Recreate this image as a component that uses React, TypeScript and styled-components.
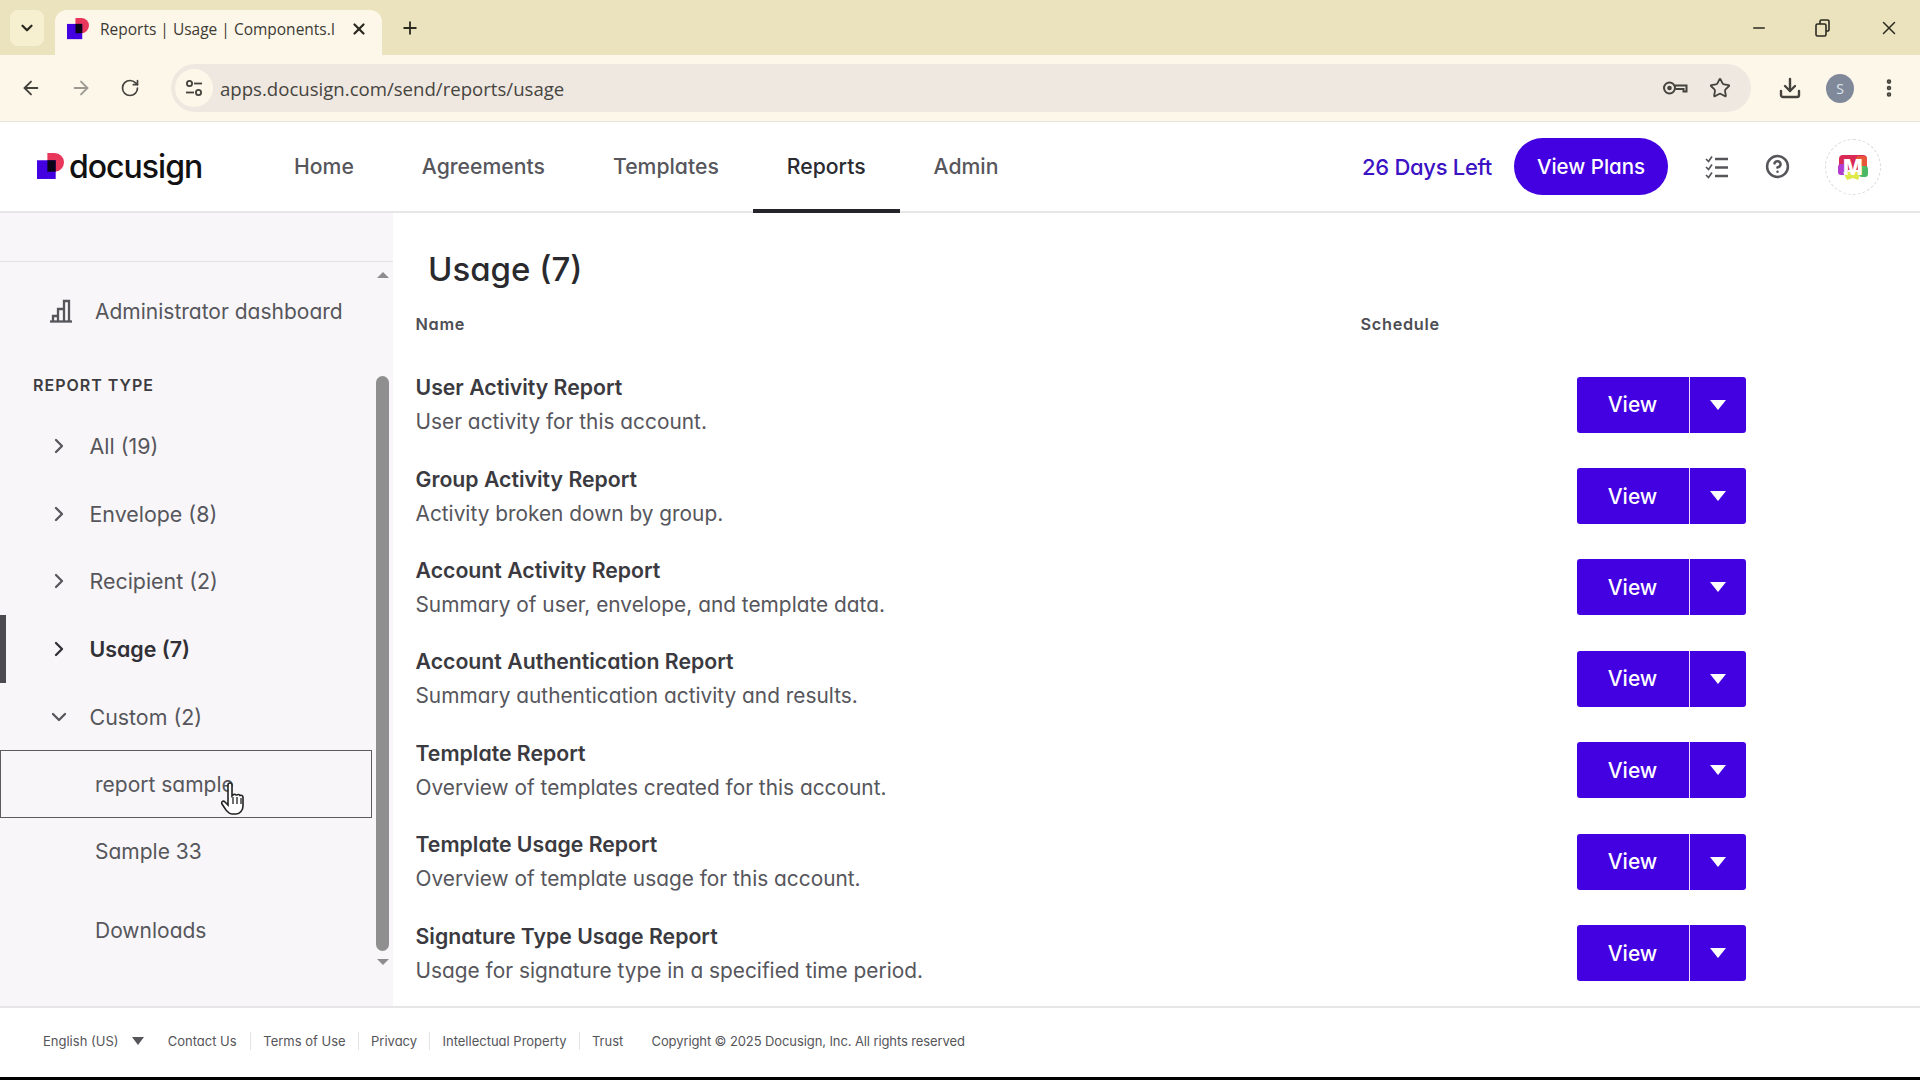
import { styled, createGlobalStyle } from "styled-components";
import {
  ArrowLeft,
  ArrowRight,
  ChevronDown,
  ChevronRight,
  CircleHelp,
  Download,
  EllipsisVertical,
  Minus,
  Plus,
  RotateCw,
  Star,
  X,
} from "lucide-react";

const BLUE = "#4300e0";
const MUTED = "#56565c";

const NAV_LINKS = ["Home", "Agreements", "Templates", "Reports", "Admin"];

const REPORT_TYPES = [
  { label: "All (19)" },
  { label: "Envelope (8)" },
  { label: "Recipient (2)" },
  { label: "Usage (7)", active: true },
  { label: "Custom (2)", open: true },
];

const REPORTS = [
  { name: "User Activity Report", text: "User activity for this account." },
  { name: "Group Activity Report", text: "Activity broken down by group." },
  { name: "Account Activity Report", text: "Summary of user, envelope, and template data." },
  { name: "Account Authentication Report", text: "Summary authentication activity and results." },
  { name: "Template Report", text: "Overview of templates created for this account." },
  { name: "Template Usage Report", text: "Overview of template usage for this account." },
  { name: "Signature Type Usage Report", text: "Usage for signature type in a specified time period." },
];

const FOOTER_LINKS = ["Contact Us", "Terms of Use", "Privacy", "Intellectual Property", "Trust"];

const GlobalStyle = createGlobalStyle`
  html, body {
    margin: 0;
    padding: 0;
    background: #000;
  }
  body {
    font-family: Inter, "Liberation Sans", sans-serif;
    font-feature-settings: "cv11";
  }
`;

const Frame = styled.div`
  width: 1920px;
  height: 1080px;
  display: flex;
  flex-direction: column;
  overflow: hidden;
  background: #fff;
`;

const TabStrip = styled.div`
  flex: 0 0 55px;
  display: flex;
  align-items: flex-end;
  background: #ebe3bd;
  color: #2b2a20;
`;

const TabMenu = styled.div`
  width: 34px;
  height: 36px;
  margin: 0 11px 9px 10px;
  display: flex;
  align-items: center;
  justify-content: center;
  border-radius: 8px;
  background: #f6efd0;
`;

const Tab = styled.div`
  width: 327px;
  height: 45px;
  box-sizing: border-box;
  padding: 0 14px 7px 12px;
  display: flex;
  align-items: center;
  gap: 11px;
  border-radius: 12px 12px 0 0;
  background: #fdf7ea;
`;

const TabTitle = styled.span`
  flex: 1;
  overflow: hidden;
  white-space: nowrap;
  font-family: "Open Sans", sans-serif;
  font-size: 15.5px;
  color: #3c3a34;
`;

const NewTab = styled.div`
  margin: 0 0 11px 18px;
  height: 32px;
  display: flex;
  align-items: center;
`;

const WindowControls = styled.div`
  margin: 0 20px 16px auto;
  display: flex;
  align-items: center;
  gap: 47px;
`;

const Toolbar = styled.div`
  flex: 0 0 66px;
  box-sizing: border-box;
  padding: 0 20px;
  display: flex;
  align-items: center;
  background: #fdf7ea;
  color: #45433d;
`;

const ToolButtons = styled.div`
  width: 151px;
  display: flex;
  align-items: center;
  gap: 28px;
`;

const UrlBar = styled.div`
  width: 1580px;
  height: 48px;
  box-sizing: border-box;
  padding: 0 20px 0 4px;
  display: flex;
  align-items: center;
  border-radius: 24px;
  background: #efe8e1;
`;

const SiteInfo = styled.div`
  width: 38px;
  height: 38px;
  margin-right: 7px;
  display: flex;
  align-items: center;
  justify-content: center;
  border-radius: 50%;
  background: #fdf7ea;
`;

const UrlText = styled.span`
  flex: 1;
  font-family: "Open Sans", sans-serif;
  font-size: 18.6px;
  color: #46443f;
`;

const UrlIcons = styled.div`
  display: flex;
  align-items: center;
  gap: 21px;
`;

const ToolRight = styled.div`
  margin-left: auto;
  display: flex;
  align-items: center;
  gap: 24px;
`;

const ProfileDot = styled.div`
  width: 28px;
  height: 29px;
  display: flex;
  align-items: center;
  justify-content: center;
  border-radius: 50%;
  background: #80899a;
  color: #dfe6ee;
  font-family: "Open Sans", sans-serif;
  font-size: 14px;
`;

const Header = styled.header`
  flex: 0 0 92px;
  box-sizing: border-box;
  padding: 0 39px 0 37px;
  display: flex;
  align-items: stretch;
  border-top: 1px solid #e7e4de;
  border-bottom: 2px solid #e6e6e6;
  background: #fff;
`;

const Logo = styled.div`
  width: 220px;
  display: flex;
  align-items: center;
  gap: 5px;
`;

const LogoText = styled.span`
  font-family: Inter, sans-serif;
  font-size: 32px;
  font-weight: 500;
  letter-spacing: -1px;
  color: #111;
`;

const Nav = styled.nav`
  display: flex;
  align-items: stretch;
  margin-left: 3px;
`;

const NavLink = styled.a<{ $active?: boolean }>`
  padding: 0 34px;
  display: flex;
  align-items: center;
  margin-bottom: -2px;
  border-bottom: 4px solid ${({ $active }) => ($active ? "#24242a" : "transparent")};
  box-sizing: border-box;
  font-size: 21.2px;
  font-weight: 500;
  color: ${({ $active }) => ($active ? "#2a2a30" : MUTED)};
`;

const HeaderRight = styled.div`
  margin-left: auto;
  display: flex;
  align-items: center;
`;

const DaysLeft = styled.span`
  font-size: 22px;
  font-weight: 500;
  color: #3b12c4;
  letter-spacing: -0.3px;
`;

const PlansButton = styled.button`
  width: 154px;
  height: 57px;
  margin: 0 36px 0 22px;
  border: none;
  border-radius: 29px;
  background: ${BLUE};
  color: #fff;
  font-family: inherit;
  font-feature-settings: inherit;
  font-size: 20.5px;
  font-weight: 500;
`;

const HeaderIcons = styled.div`
  display: flex;
  align-items: center;
  gap: 35px;
  color: #55555a;
`;

const Avatar = styled.div`
  width: 56px;
  height: 56px;
  margin-left: 35px;
  display: flex;
  align-items: center;
  justify-content: center;
  border: 1px dashed #d8d8d8;
  border-radius: 50%;
  box-sizing: border-box;
`;

const Body = styled.div`
  flex: 1;
  min-height: 0;
  display: flex;
`;

const Sidebar = styled.aside`
  flex: 0 0 393px;
  display: flex;
  flex-direction: column;
  background: #f8f6f8;
`;

const SideTop = styled.div`
  flex: 0 0 48px;
  border-bottom: 1px solid #e4e3e4;
`;

const SideScroll = styled.div`
  flex: 1;
  min-height: 0;
  display: flex;
`;

const SideNav = styled.div`
  flex: 0 0 372px;
  display: flex;
  flex-direction: column;
`;

const DashboardRow = styled.div`
  height: 98px;
  padding-left: 49px;
  display: flex;
  align-items: center;
  gap: 22px;
  font-size: 21px;
  color: ${MUTED};
`;

const SideLabel = styled.div`
  height: 54px;
  margin-top: -2px;
  padding-left: 33px;
  display: flex;
  align-items: center;
  font-size: 16px;
  font-weight: 600;
  letter-spacing: 1px;
  color: #3c3c40;
`;

const TypeRow = styled.div<{ $active?: boolean }>`
  height: 67.7px;
  box-sizing: border-box;
  padding-left: 47px;
  display: flex;
  align-items: center;
  gap: 18.5px;
  border-left: 6px solid ${({ $active }) => ($active ? "#4a4a50" : "transparent")};
  font-size: 21.4px;
  font-weight: ${({ $active }) => ($active ? 600 : 400)};
  color: ${({ $active }) => ($active ? "#303036" : MUTED)};

  & > svg {
    margin-left: -6px;
  }
`;

const SubRow = styled.div<{ $focused?: boolean; $gapTop?: number }>`
  position: relative;
  height: 67.5px;
  box-sizing: border-box;
  padding-left: 94px;
  display: flex;
  align-items: center;
  margin-top: ${({ $gapTop }) => $gapTop ?? 0}px;
  border: 1.5px solid ${({ $focused }) => ($focused ? "#5c5c5c" : "transparent")};
  font-size: 21px;
  color: ${MUTED};
`;

const HandCursor = styled.svg`
  position: absolute;
  left: 220px;
  top: 31px;
`;

const ScrollTrack = styled.div`
  flex: 0 0 13px;
  margin-left: 4px;
  display: flex;
  flex-direction: column;
  align-items: center;
  color: #8d8d8d;
`;

const ScrollArrow = styled.div<{ $down?: boolean }>`
  width: 0;
  height: 0;
  margin-top: ${({ $down }) => ($down ? 8 : 10)}px;
  border-left: 6px solid transparent;
  border-right: 6px solid transparent;
  ${({ $down }) => ($down ? "border-top: 6px solid #8d8d8d;" : "border-bottom: 6px solid #8d8d8d;")}
`;

const ScrollThumb = styled.div`
  width: 13px;
  height: 575px;
  margin-top: 98px;
  border-radius: 7px;
  background: #8f8f8f;
`;

const Main = styled.main`
  flex: 1;
  box-sizing: border-box;
  padding: 33px 0 0 22.5px;
  display: flex;
  flex-direction: column;
  min-width: 0;
  background: #fff;
`;

const PageTitle = styled.h1`
  margin: 0 0 0 12.5px;
  line-height: 46px;
  font-size: 33px;
  font-weight: 500;
  color: #2a2a2e;
`;

const ReportGrid = styled.div`
  display: grid;
  grid-template-columns: 945px 216px 169px;
  align-items: center;
`;

const TableHead = styled(ReportGrid)`
  height: 34px;
  margin-top: 15px;
  font-size: 16.3px;
  font-weight: 600;
  letter-spacing: 0.7px;
  color: #4e4e54;
`;

const ReportList = styled.div`
  margin-top: 18px;
  display: flex;
  flex-direction: column;
`;

const ReportRow = styled(ReportGrid)`
  height: 91.4px;
`;

const ReportInfo = styled.div`
  margin-top: -1px;
`;

const ReportName = styled.div`
  margin-bottom: 9px;
  font-size: 21.25px;
  font-weight: 600;
  color: #3a3a40;
`;

const ReportText = styled.div`
  font-size: 20.85px;
  color: ${MUTED};
`;

const SplitButton = styled.div`
  width: 169px;
  height: 56px;
  display: flex;
  border-radius: 3px;
  overflow: hidden;
  background: ${BLUE};
  color: #fff;
`;

const ViewPart = styled.div`
  flex: 0 0 112px;
  display: flex;
  align-items: center;
  justify-content: center;
  border-right: 1.5px solid #f0dcff;
  font-size: 21px;
  font-weight: 500;
`;

const CaretPart = styled.div`
  flex: 1;
  display: flex;
  align-items: center;
  justify-content: center;
`;

const Caret = styled.span<{ $color: string; $size: number }>`
  width: 0;
  height: 0;
  border-left: ${({ $size }) => $size}px solid transparent;
  border-right: ${({ $size }) => $size}px solid transparent;
  border-top: ${({ $size }) => $size + 2}px solid ${({ $color }) => $color};
`;

const Footer = styled.footer`
  flex: 0 0 71px;
  box-sizing: border-box;
  padding: 0 0 4px 43px;
  display: flex;
  align-items: center;
  border-top: 2px solid #e6e6e6;
  font-size: 13px;
  color: #55555a;
`;

const Language = styled.div`
  width: 112px;
  display: flex;
  align-items: center;
  gap: 14px;
`;

const FooterLink = styled.a`
  padding: 0 12.200px;
  border-right: 1px solid #e4e4e4;
  line-height: 18px;

  &:first-of-type {
    padding: 0 13.500px 0 12.700px;
  }
  &:last-of-type {
    border-right: none;
  }
`;

const Copyright = styled.span`
  margin-left: 16px;
  letter-spacing: -0.1px;
`;

const BlackEdge = styled.div`
  flex: 0 0 3px;
  background: #000;
`;

const DocuMark = ({ size }: { size: number }) => (
  <svg width={size} height={size} viewBox="0 0 26 26">
    <path d="M10 0h7a9 9 0 0 1 0 18h-7z" fill="#e8375a" />
    <rect x="0" y="7" width="18" height="18" fill={BLUE} />
    <rect x="10" y="7" width="8" height="11" fill="#0b0418" />
  </svg>
);

const SiteTune = () => (
  <svg width="20" height="20" viewBox="0 0 20 20" fill="none" stroke="#45433d" strokeWidth="1.8">
    <circle cx="5.5" cy="5.5" r="2.6" />
    <path d="M10 5.5h8" />
    <circle cx="14.5" cy="14.5" r="2.6" />
    <path d="M2 14.5h8" />
  </svg>
);

const KeyIcon = () => (
  <svg width="26" height="18" viewBox="0 0 26 18" fill="none" stroke="#45433d" strokeWidth="2">
    <circle cx="7.5" cy="9" r="5.5" />
    <circle cx="7.5" cy="9" r="1.3" fill="#45433d" />
    <path d="M13 6.5h11.5v6h-3v-2.500h-8" />
  </svg>
);

const RestoreIcon = () => (
  <svg width="16" height="18" viewBox="0 0 16 18" fill="none" stroke="#2b2a20" strokeWidth="1.6">
    <rect x="1" y="5" width="10" height="12" rx="1.5" />
    <path d="M5 5V2.500a1.500 1.500 0 0 1 1.500-1.500h6A1.500 1.500 0 0 1 14 2.500v8A1.500 1.500 0 0 1 12.500 12H11" />
  </svg>
);

const BarsIcon = () => (
  <svg width="24" height="24" viewBox="0 0 24 24" fill="none" stroke="#55555a" strokeWidth="2.3">
    <path d="M1 22.500h22" />
    <path d="M4 22v-5h5v5M9 22V10h6v12M15 22V2h5v20" />
  </svg>
);

const ChecklistIcon = () => (
  <svg width="26" height="26" viewBox="0 0 26 26" fill="none" stroke="#55555a" strokeWidth="2">
    <path d="M2 5l2.500 2.500L8 2.500M2 13l2.500 2.500L8 10.500M2 21l2.500 2.500L8 18.500" strokeWidth="1.7" />
    <path d="M11 5h13M11 13.500h13M11 22h13" strokeWidth="2.4" />
  </svg>
);

const BrandAvatar = () => (
  <svg width="38" height="38" viewBox="0 0 38 38">
    <rect x="5" y="7" width="28" height="15" rx="4" fill="#d92a55" />
    <rect x="22" y="8" width="11" height="12" rx="3" fill="#e8563a" />
    <rect x="4" y="16" width="10" height="11" rx="3" fill="#b23cd0" />
    <rect x="25" y="18" width="9" height="11" rx="3" fill="#4bb866" />
    <path d="M9 24h18l-3 8-5-2-6 2z" fill="#dfe84a" />
    <text x="19" y="27" textAnchor="middle" fontSize="21" fontWeight="800" fill="#fff" fontFamily="Inter, sans-serif">
      M
    </text>
  </svg>
);

const App = () => (
  <>
    <GlobalStyle />
    <Frame>
      <TabStrip>
        <TabMenu>
          <ChevronDown size={18} strokeWidth={3} />
        </TabMenu>
        <Tab>
          <DocuMark size={22} />
          <TabTitle>Reports | Usage | Components.I</TabTitle>
          <X size={18} strokeWidth={3} />
        </Tab>
        <NewTab>
          <Plus size={20} strokeWidth={2.2} />
        </NewTab>
        <WindowControls>
          <Minus size={18} strokeWidth={2} />
          <RestoreIcon />
          <X size={22} strokeWidth={1.6} />
        </WindowControls>
      </TabStrip>

      <Toolbar>
        <ToolButtons>
          <ArrowLeft size={22} />
          <ArrowRight size={22} color="#9c9a92" />
          <RotateCw size={20} />
        </ToolButtons>
        <UrlBar>
          <SiteInfo>
            <SiteTune />
          </SiteInfo>
          <UrlText>apps.docusign.com/send/reports/usage</UrlText>
          <UrlIcons>
            <KeyIcon />
            <Star size={22} strokeWidth={2} />
          </UrlIcons>
        </UrlBar>
        <ToolRight>
          <Download size={24} strokeWidth={2.4} />
          <ProfileDot>S</ProfileDot>
          <EllipsisVertical size={22} strokeWidth={3} />
        </ToolRight>
      </Toolbar>

      <Header>
        <Logo>
          <DocuMark size={27} />
          <LogoText>docusign</LogoText>
        </Logo>
        <Nav>
          {NAV_LINKS.map((label) => (
            <NavLink key={label} $active={label === "Reports"}>
              {label}
            </NavLink>
          ))}
        </Nav>
        <HeaderRight>
          <DaysLeft>26 Days Left</DaysLeft>
          <PlansButton type="button">View Plans</PlansButton>
          <HeaderIcons>
            <ChecklistIcon />
            <CircleHelp size={25} strokeWidth={2.4} />
          </HeaderIcons>
          <Avatar>
            <BrandAvatar />
          </Avatar>
        </HeaderRight>
      </Header>

      <Body>
        <Sidebar>
          <SideTop />
          <SideScroll>
            <SideNav>
              <DashboardRow>
                <BarsIcon />
                Administrator dashboard
              </DashboardRow>
              <SideLabel>REPORT TYPE</SideLabel>
              {REPORT_TYPES.map(({ label, active, open }) => (
                <TypeRow key={label} $active={active}>
                  {open ? <ChevronDown size={24} strokeWidth={2.3} /> : <ChevronRight size={24} strokeWidth={2.3} />}
                  {label}
                </TypeRow>
              ))}
              <SubRow $focused>
                report sample
                <HandCursor width="26" height="34" viewBox="0 0 26 34">
                  <path
                    d="M7 3a2 2 0 0 1 4 0v11l1-1a2 2 0 0 1 3 0l1 0a2 2 0 0 1 3 0.500a2 2 0 0 1 3 1.500v9c0 4-3 8-7 8h-4c-3 0-4-2-6-4l-4-6c-1-2 1-4 3-2l3 3z"
                    fill="#fff"
                    stroke="#222"
                    strokeWidth="1.6"
                  />
                  <path d="M12 15v7M16 15v7M20 16v6" stroke="#222" strokeWidth="1.3" />
                </HandCursor>
              </SubRow>
              <SubRow>Sample 33</SubRow>
              <SubRow $gapTop={11}>Downloads</SubRow>
            </SideNav>
            <ScrollTrack>
              <ScrollArrow />
              <ScrollThumb />
              <ScrollArrow $down />
            </ScrollTrack>
          </SideScroll>
        </Sidebar>

        <Main>
          <PageTitle>Usage (7)</PageTitle>
          <TableHead>
            <span>Name</span>
            <span>Schedule</span>
          </TableHead>
          <ReportList>
            {REPORTS.map(({ name, text }) => (
              <ReportRow key={name}>
                <ReportInfo>
                  <ReportName>{name}</ReportName>
                  <ReportText>{text}</ReportText>
                </ReportInfo>
                <span />
                <SplitButton>
                  <ViewPart>View</ViewPart>
                  <CaretPart>
                    <Caret $color="#fff" $size={8} />
                  </CaretPart>
                </SplitButton>
              </ReportRow>
            ))}
          </ReportList>
        </Main>
      </Body>

      <Footer>
        <Language>
          English (US)
          <Caret $color="#55555a" $size={6} />
        </Language>
        {FOOTER_LINKS.map((label) => (
          <FooterLink key={label}>{label}</FooterLink>
        ))}
        <Copyright>Copyright © 2025 Docusign, Inc. All rights reserved</Copyright>
      </Footer>
      <BlackEdge />
    </Frame>
  </>
);

export default App;
